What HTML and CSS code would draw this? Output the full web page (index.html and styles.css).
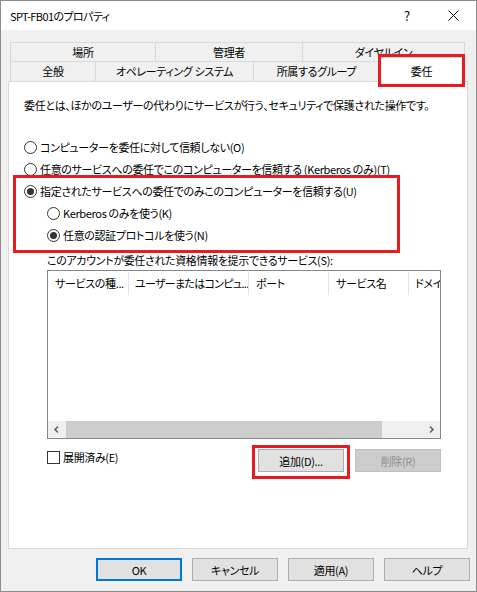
FILE: index.html
```html
<!DOCTYPE html>
<html>
<head>
    <title>SPT-FB01のプロパティ</title>
    <link rel="stylesheet" href="styles.css">
</head>
<body>
    <div class="window">
        <div class="titlebar">
            <span class="title">SPT-FB01のプロパティ</span>
            <span class="cap-btn">?</span>
            <span class="cap-btn">
                <svg width="11" height="11" viewBox="0 0 11 11"><path d="M0.5 0.5 L10.5 10.5 M10.5 0.5 L0.5 10.5" stroke="#000" stroke-width="1" fill="none"/></svg>
            </span>
        </div>

        <div class="tabs">
            <div class="tab-row back">
                <div class="tab t-place">場所</div>
                <div class="tab t-admin">管理者</div>
                <div class="tab t-dial">ダイヤルイン</div>
            </div>
            <div class="tab-row front">
                <div class="tab t-general">全般</div>
                <div class="tab t-os">オペレーティング システム</div>
                <div class="tab t-member">所属するグループ</div>
                <div class="tab t-deleg selected">委任</div>
            </div>
        </div>

        <div class="panel">
            <p class="desc">委任とは、ほかのユーザーの代わりにサービスが行う、セキュリティで保護された操作です。</p>

            <div class="radios">
                <div class="opt"><span class="radio"></span>コンピューターを委任に対して信頼しない(O)</div>
                <div class="opt"><span class="radio"></span>任意のサービスへの委任でこのコンピューターを信頼する (Kerberos のみ)(T)</div>
                <div class="opt"><span class="radio on"></span>指定されたサービスへの委任でのみこのコンピューターを信頼する(U)</div>
                <div class="opt sub"><span class="radio"></span>Kerberos のみを使う(K)</div>
                <div class="opt sub"><span class="radio on"></span>任意の認証プロトコルを使う(N)</div>
            </div>

            <div class="list-label">このアカウントが委任された資格情報を提示できるサービス(S):</div>
            <div class="listview">
                <div class="lv-head">
                    <div class="col c1">サービスの種...</div>
                    <div class="col c2">ユーザーまたはコンピュ...</div>
                    <div class="col c3">ポート</div>
                    <div class="col c4">サービス名</div>
                    <div class="col c5">ドメイ</div>
                </div>
                <div class="lv-body"></div>
                <div class="hscroll">
                    <span class="arrow">
                        <svg width="17" height="17" viewBox="0 0 17 17"><polyline points="10,5.5 7,8.5 10,11.5" stroke="#606060" stroke-width="1.6" fill="none"/></svg>
                    </span>
                    <span class="thumb"></span>
                    <span class="track"></span>
                    <span class="arrow">
                        <svg width="17" height="17" viewBox="0 0 17 17"><polyline points="7,5.5 10,8.5 7,11.5" stroke="#606060" stroke-width="1.6" fill="none"/></svg>
                    </span>
                </div>
            </div>

            <div class="actions">
                <label class="check"><span class="box"></span>展開済み(E)</label>
                <div class="btn-group">
                    <button class="btn">追加(D)...</button>
                    <button class="btn" disabled>削除(R)</button>
                </div>
            </div>
        </div>

        <div class="footer">
            <button class="btn default">OK</button>
            <button class="btn">キャンセル</button>
            <button class="btn">適用(A)</button>
            <button class="btn">ヘルプ</button>
        </div>

        <!-- red annotation boxes -->
        <div class="mark mark-tab"></div>
        <div class="mark mark-radios"></div>
        <div class="mark mark-add"></div>
    </div>
</body>
</html>
```

FILE: styles.css
```css
* {
    box-sizing: border-box;
}
body {
    margin: 0;
    font-family: "Noto Sans CJK JP", "Noto Sans", sans-serif;
    font-size: 11px;
    letter-spacing: -0.35px;
    color: #000;
    font-feature-settings: "palt";
}
.window {
    position: relative;
    width: 477px;
    height: 592px;
    border: 1px solid #8c8c8c;
    background: #f0f0f0;
}

/* title bar */
.titlebar {
    height: 29px;
    background: #fff;
    display: flex;
    align-items: center;
    padding-left: 9px;
}
.title {
    flex: 1;
    line-height: 16px;
    letter-spacing: -0.6px;
}
.cap-btn {
    width: 46px;
    height: 29px;
    display: flex;
    align-items: center;
    justify-content: center;
    font-size: 13px;
}

/* tabs */
.tabs {
    margin: 12px 0 0 9px;
}
.tab-row {
    display: flex;
}
.tab-row.back {
    height: 19px;
}
.tab-row.front {
    height: 20px;
    align-items: flex-end;
}
.tab {
    border: 1px solid #d9d9d9;
    border-bottom: none;
    background: #f0f0f0;
    text-align: center;
    white-space: nowrap;
}
.tab + .tab {
    margin-left: -1px;
}
.back .tab {
    height: 19px;
    line-height: 18px;
}
.front .tab {
    height: 20px;
    line-height: 19px;
}
.t-place { width: 146px; }
.t-admin { width: 148px; }
.t-dial { width: 163px; }
.t-general { width: 86px; }
.t-os { width: 159px; }
.t-member { width: 127px; }
.front .tab.selected {
    position: relative;
    z-index: 1;
    width: 87px;
    height: 25px;
    margin-left: -2px;
    margin-bottom: -1px;
    padding-top: 4px;
    background: #fff;
}

/* page */
.panel {
    margin-left: 7px;
    width: 460px;
    height: 468px;
    border: 1px solid #d9d9d9;
    background: #fff;
    padding: 15px 15px 0 15px;
}
.desc {
    margin: 0;
    line-height: 16px;
    white-space: nowrap;
}
.radios {
    margin-top: 23px;
}
.opt {
    height: 22px;
    display: flex;
    align-items: center;
    white-space: nowrap;
}
.opt.sub {
    padding-left: 23px;
}
.radio {
    width: 13px;
    height: 13px;
    margin-right: 3px;
    border: 1px solid #333;
    border-radius: 50%;
    background: #fff;
    display: flex;
    align-items: center;
    justify-content: center;
}
.radio.on::after {
    content: "";
    width: 7px;
    height: 7px;
    border-radius: 50%;
    background: #333;
}
.list-label {
    margin: 6px 0 0 23px;
    line-height: 16px;
}

/* list view */
.listview {
    margin: 2px 0 0 23px;
    width: 394px;
    height: 169px;
    border: 1px solid #828790;
    display: flex;
    flex-direction: column;
    overflow: hidden;
}
.lv-head {
    height: 24px;
    display: flex;
    padding-top: 1px;
    white-space: nowrap;
}
.col {
    flex-shrink: 0;
    height: 23px;
    line-height: 22px;
    padding-left: 7px;
    border-right: 1px solid #e5e5e5;
    overflow: hidden;
}
.c1 { width: 81px; }
.c2 { width: 120px; padding-left: 6px; letter-spacing: -0.7px; }
.c3 { width: 80px; }
.c4 { width: 80px; }
.c5 { width: 80px; padding-left: 6px; }
.lv-body {
    flex: 1;
}
.hscroll {
    height: 17px;
    display: flex;
    background: #f0f0f0;
}
.arrow {
    width: 17px;
    height: 17px;
    display: flex;
}
.thumb {
    margin-left: 1px;
    width: 316px;
    background: #cdcdcd;
}
.track {
    flex: 1;
}

/* actions */
.actions {
    margin: 10px 0 0 23px;
    width: 394px;
    display: flex;
    justify-content: space-between;
    align-items: flex-start;
}
.check {
    display: flex;
    align-items: center;
    height: 16px;
    line-height: 16px;
}
.box {
    width: 13px;
    height: 13px;
    margin-right: 3px;
    border: 1px solid #333;
    background: #fff;
}
.btn-group {
    display: flex;
    gap: 11px;
}
.btn {
    width: 86px;
    height: 23px;
    padding: 0;
    border: 1px solid #adadad;
    background: #e1e1e1;
    font-family: inherit;
    font-size: 11px;
    letter-spacing: -0.35px;
    color: #000;
    font-feature-settings: "palt";
}
.btn:disabled {
    background: #cccccc;
    border-color: #bfbfbf;
    color: #8e8e8e;
}

/* footer */
.footer {
    margin-top: 9px;
    display: flex;
    justify-content: flex-end;
    gap: 10px;
    padding-right: 6px;
}
.footer .btn {
    width: 86px;
}
.btn.default {
    border: 2px solid #0078d7;
}

/* annotations */
.mark {
    position: absolute;
    border: 3px solid #e81b23;
    z-index: 5;
}
.mark-tab {
    left: 377px;
    top: 53px;
    width: 87px;
    height: 33px;
}
.mark-radios {
    left: 12px;
    top: 174px;
    width: 387px;
    height: 78px;
}
.mark-add {
    left: 251px;
    top: 444px;
    width: 98px;
    height: 34px;
}
```
